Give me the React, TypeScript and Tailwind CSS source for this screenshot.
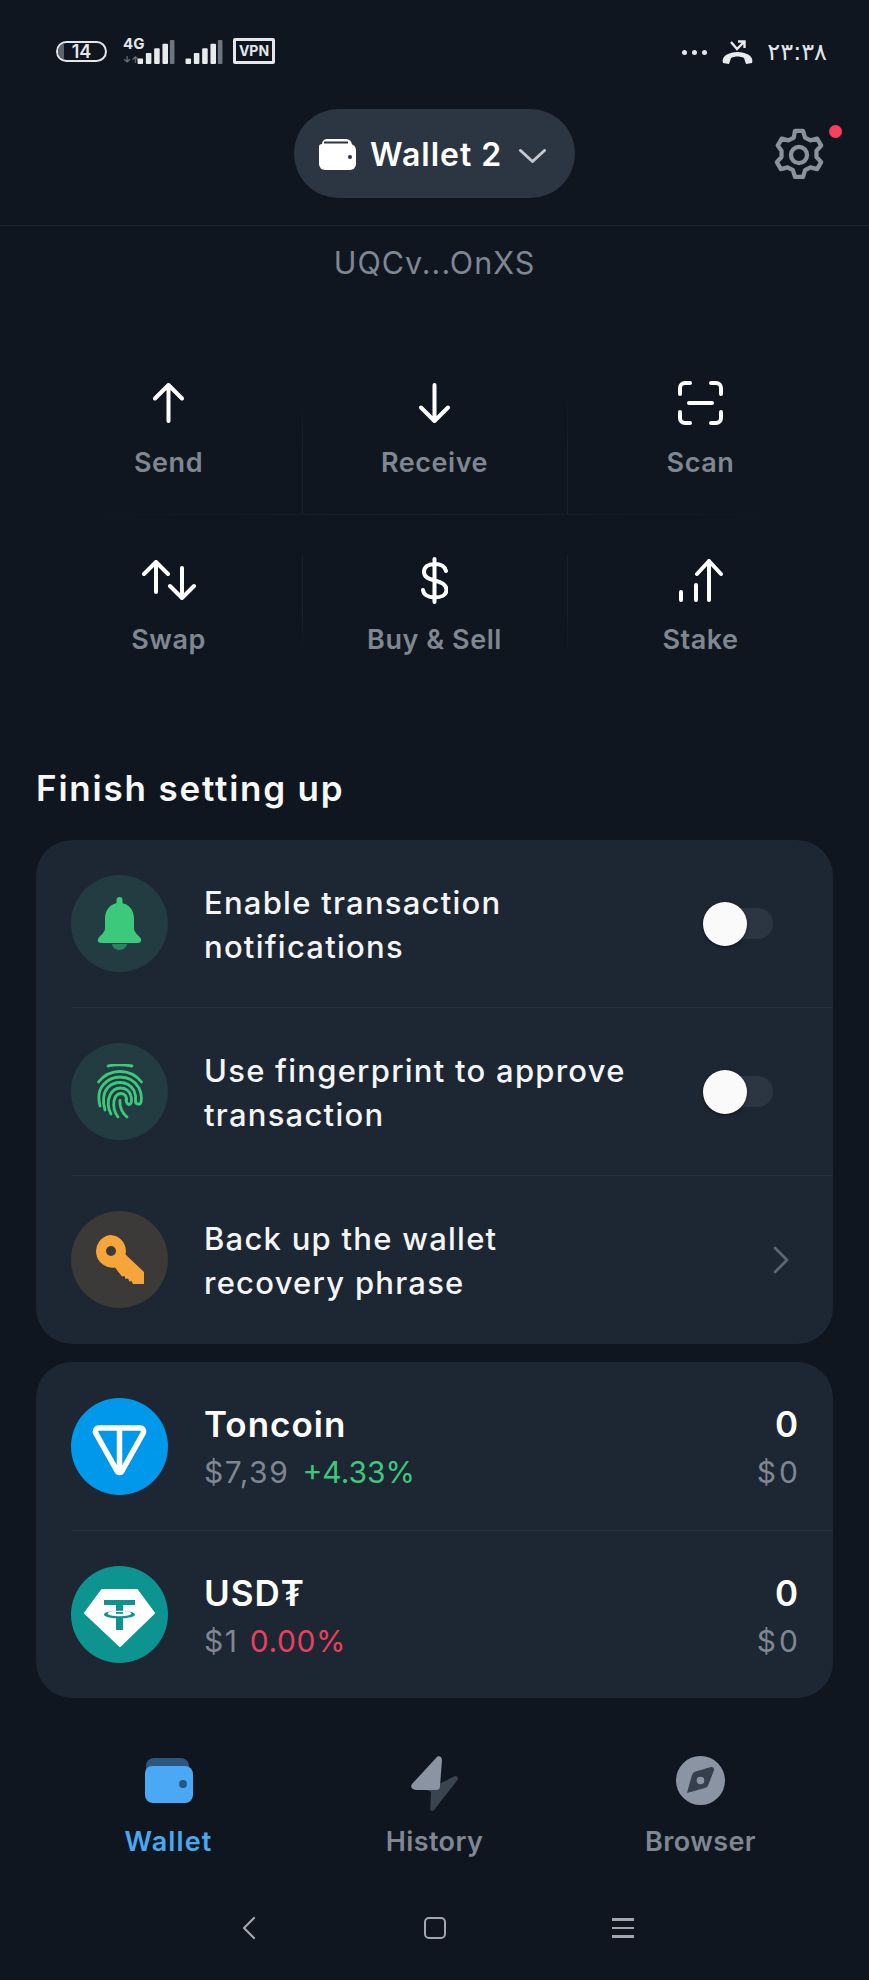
import React from 'react';

const fontStack = { fontFamily: 'Inter, "Noto Sans", sans-serif' };

const WalletGlyph = ({ className = '' }: { className?: string }) => (
  <svg viewBox="0 0 37 32" className={className}>
    <path d="M3 8V6a5 5 0 0 1 5-5h19a6 6 0 0 1 6 6v1z" fill="#fff" />
    <path d="M5 4.5h24" stroke="#2c3542" strokeWidth="2" />
    <path d="M0 9a3 3 0 0 1 3-3h28a6 6 0 0 1 6 6v14a6 6 0 0 1-6 6H6a6 6 0 0 1-6-6z" fill="#fff" />
    <circle cx="31" cy="19" r="2" fill="#2c3542" />
  </svg>
);

const Signal = ({ className = '' }: { className?: string }) => (
  <svg viewBox="0 0 40 26" className={className}>
    <rect x="0" y="20" width="6" height="6" rx="1" fill="#e8eaee" />
    <rect x="9" y="14" width="6" height="12" rx="1" fill="#e8eaee" />
    <rect x="18" y="9" width="6" height="17" rx="1" fill="#e8eaee" />
    <rect x="27" y="4" width="6" height="22" rx="1" fill="#e8eaee" />
    <rect x="35" y="0" width="5" height="26" rx="1" fill="#6f757e" />
  </svg>
);

const StatusBar = () => (
  <div className="h-[109px] flex justify-between pl-[56px] pr-[42px] pt-[38px]">
    <div className="flex items-start">
      <div className="relative overflow-hidden w-[51px] h-[21px] mt-[3px] rounded-full border-2 border-[#e4e6ea] flex items-center justify-center text-[18px] font-semibold leading-none text-[#e4e6ea]">
        <span className="absolute left-0 top-0 bottom-0 w-[6px] bg-[#5d636c]" />
        14
      </div>
      <div className="relative w-[52px] h-[26px] ml-[16px]">
        <span className="absolute left-0 top-[-2px] text-[15px] font-bold leading-none text-[#e4e6ea]">4G</span>
        <span className="absolute left-0 bottom-0 text-[9px] font-bold leading-none text-[#6f757e]">↓↑</span>
        <Signal className="absolute right-0 bottom-0 w-[38px] h-[24px]" />
      </div>
      <Signal className="w-[38px] h-[24px] ml-[10px] mt-[2px]" />
      <div className="w-[42px] h-[26px] ml-[10px] border-[3px] border-[#e4e6ea] rounded-[2px] flex items-center justify-center text-[14px] font-bold leading-none text-[#e4e6ea]">
        VPN
      </div>
    </div>
    <div className="flex items-center h-[28px]">
      <div className="flex gap-[5px]">
        <span className="w-[5px] h-[5px] rounded-full bg-[#e4e6ea]" />
        <span className="w-[5px] h-[5px] rounded-full bg-[#e4e6ea]" />
        <span className="w-[5px] h-[5px] rounded-full bg-[#e4e6ea]" />
      </div>
      <svg viewBox="0 0 31 24" className="w-[31px] h-[24px] ml-[15px]">
        <path d="M1 23c-1-3 0-6 3-8 7-4 16-4 23 0 3 2 4 5 3 8l-6 1-2-6c-4-2-9-2-13 0l-2 6z" fill="#e8eaee" />
        <path d="M9 2l6 7 7-7M16 1.5h6.5V8" fill="none" stroke="#e8eaee" strokeWidth="2.4" />
      </svg>
      <span
        className="ml-[14px] text-[24px] leading-none text-[#e4e6ea]"
        style={{ fontFamily: '"DejaVu Sans", sans-serif' }}
      >
        ۲۳:۳۸
      </span>
    </div>
  </div>
);

const Header = () => (
  <div className="h-[117px] border-b border-[#1c232e] grid grid-cols-[1fr_281px_1fr]">
    <div />
    <div className="h-[89px] rounded-full bg-[#2c3542] flex items-center pl-[25px]">
      <WalletGlyph className="w-[37px] h-[32px]" />
      <span className="ml-[14px] mt-[3px] text-[32px] font-semibold leading-none text-white tracking-[1px]">Wallet 2</span>
      <svg viewBox="0 0 27 14" className="w-[27px] h-[14px] ml-[17px] mt-[5px]">
        <path d="M1.5 1.5 13.5 12.5 25.5 1.5" fill="none" stroke="#c3c8cf" strokeWidth="3" strokeLinecap="round" strokeLinejoin="round" />
      </svg>
    </div>
    <div className="flex justify-end pr-[44px] pt-[19px]">
      <div className="relative w-[52px] h-[54px]">
        <svg viewBox="0.4 0.4 23.2 23.2" className="w-[52px] h-[54px]" fill="none" stroke="#8b929d" strokeWidth="1.9" strokeLinejoin="round">
          <path d="M10.2 1.2h3.6l.9 3 2.4 1.3 3-.8 1.8 3.1-2.1 2.3v2.8l2.1 2.3-1.8 3.1-3-.8-2.400 1.300-.9 3h-3.600l-.9-3-2.400-1.300-3 .8-1.800-3.100 2.100-2.300v-2.800L2.500 7.800l1.800-3.100 3 .8 2.400-1.300z" />
          <circle cx="12" cy="12" r="3.6" />
        </svg>
        <span className="absolute right-[-17px] top-[-3px] w-[13px] h-[13px] rounded-full bg-[#f9405f]" />
      </div>
    </div>
  </div>
);

const ArrowUp = () => (
  <svg viewBox="0 0 31 40" className="w-[31px] h-[40px]" fill="none" stroke="#fff" strokeWidth="4" strokeLinecap="round" strokeLinejoin="round">
    <path d="M15.5 38V2M2 15.5 15.5 2 29 15.5" />
  </svg>
);
const ArrowDown = () => (
  <svg viewBox="0 0 31 40" className="w-[31px] h-[40px]" fill="none" stroke="#fff" strokeWidth="4" strokeLinecap="round" strokeLinejoin="round">
    <path d="M15.5 2V38M2 24.5 15.5 38 29 24.5" />
  </svg>
);
const ScanIcon = () => (
  <svg viewBox="0 0 45 44" className="w-[45px] h-[44px]" fill="none" stroke="#fff" strokeWidth="4" strokeLinecap="round">
    <path d="M2 13V7a5 5 0 0 1 5-5h5M33 2h5a5 5 0 0 1 5 5v6M2 31v6a5 5 0 0 0 5 5h5M33 42h5a5 5 0 0 0 5-5v-6M11 22h23" />
  </svg>
);
const SwapIcon = () => (
  <svg viewBox="0 0 54 40" className="w-[54px] h-[40px]" fill="none" stroke="#fff" strokeWidth="4" strokeLinecap="round" strokeLinejoin="round">
    <path d="M14 32V2M2 14 14 2l12 12M40 8v30M28 26l12 12 12-12" />
  </svg>
);
const DollarIcon = () => (
  <svg viewBox="0 0 27 47" className="w-[27px] h-[47px]" fill="none" stroke="#fff" strokeWidth="4" strokeLinecap="round">
    <path d="M13.5 2v43M25 14c-1-4.500-5-7-11.500-7C7 7 3 10 3 15c0 11 22.500 6 22.500 18 0 5-5 7.500-12 7.500C7 40.500 2.500 37.500 2 33" />
  </svg>
);
const StakeIcon = () => (
  <svg viewBox="0 0 44 43" className="w-[44px] h-[43px]" fill="none" stroke="#fff" strokeWidth="4" strokeLinecap="round" strokeLinejoin="round">
    <path d="M2 41v-8M17 41V26M30 41V2M18 15 30 2l12 13" />
  </svg>
);

const ActionCell = ({ icon, label, middle, fade }: { icon: React.ReactNode; label: string; middle?: boolean; fade?: 'down' | 'up' }) => (
  <div
    className={`w-[266px] flex flex-col items-center ${middle ? 'border-x border-transparent' : ''} ${
      middle && fade === 'down' ? '[border-image:linear-gradient(to_bottom,transparent_15%,#1a212b_50%)_1]' : ''
    } ${middle && fade === 'up' ? '[border-image:linear-gradient(to_bottom,#1a212b_50%,transparent_85%)_1]' : ''}`}
  >
    <div className="h-[50px] flex items-center justify-center">{icon}</div>
    <span className="mt-[19px] text-[27px] font-semibold leading-[32px] text-[#7f8793] tracking-[0.55px]">{label}</span>
  </div>
);

const Actions = () => (
  <div className="w-[798px] mx-auto mt-[97px]">
    <div className="flex h-[136px]">
      <ActionCell icon={<ArrowUp />} label="Send" />
      <ActionCell icon={<ArrowDown />} label="Receive" middle fade="down" />
      <ActionCell icon={<ScanIcon />} label="Scan" />
    </div>
    <div className="h-px mx-[33px] bg-linear-to-r from-transparent via-[#1a212b] to-transparent" />
    <div className="flex h-[156px] pt-[40px]">
      <ActionCell icon={<SwapIcon />} label="Swap" />
      <ActionCell icon={<DollarIcon />} label="Buy &amp; Sell" middle fade="up" />
      <ActionCell icon={<StakeIcon />} label="Stake" />
    </div>
  </div>
);

const IconCircle = ({ bg, children }: { bg: string; children: React.ReactNode }) => (
  <div className={`w-[97px] h-[97px] shrink-0 rounded-full flex items-center justify-center ${bg}`}>{children}</div>
);

const Toggle = () => (
  <div className="relative w-[70px] h-[31px] rounded-full bg-[#2c3542] ml-auto mr-[60px]">
    <span className="absolute left-0 top-[-6px] w-[44px] h-[44px] rounded-full bg-[#fafafa] shadow-[0_1px_3px_rgba(0,0,0,0.5)]" />
  </div>
);

const BellIcon = () => (
  <svg viewBox="0 0 45 53" className="w-[45px] h-[53px]">
    <path d="M15 47h15a7.500 6 0 0 1-15 0z" fill="#2d8263" />
    <rect x="19.500" y="0" width="6" height="10" rx="3" fill="#3cc97c" />
    <path d="M22.500 6C13 6 8 13 8 22v9c0 4-3 6-6.500 10C0 43 1 46 4 46h37c3 0 4-3 2.500-5C40 37 37 35 37 31v-9C37 13 32 6 22.500 6z" fill="#3cc97c" />
  </svg>
);

const FingerprintIcon = () => (
  <svg viewBox="0 0 46 55" className="w-[46px] h-[55px]" fill="none" stroke="#3cc97c" strokeWidth="2.800" strokeLinecap="round">
    <path d="M11 2c7-1.500 16-1.500 24 0" />
    <path d="M1.500 18C7 11 15 7.500 23 7.500S39 11 44.500 18" />
    <path d="M3 42C1 34 1.500 26 6.500 20.500 11 15.500 17 13 23 13c8 0 15 4 19 11 2 4 3 9 2 14-.5 3-5 3-5.500-.5" />
    <path d="M8 46C5.500 38 6 29 10.500 24 14 20 18.500 18.500 23 18.500c6 0 11 3 14 8 1.500 3.500 2 7 1.500 10.500" />
    <path d="M14 50c-3-5-4-13-1-19 2.500-5 6.500-7 10.500-7 5 0 9.500 3 10.500 8 1 4 .5 8-1.500 8.500-3 .5-3-2.500-3.500-5" />
    <path d="M21 53c-3-4-5-10-4-16 1-5 3.500-7.500 7-7.500 4 0 6 3 5.500 8" />
    <path d="M30 53c-4-3-8-10-7-16.500" />
  </svg>
);

const KeyIcon = () => (
  <svg viewBox="0 0 49 49" className="w-[49px] h-[49px]">
    <path
      fillRule="evenodd"
      d="M15 0a16 16 0 0 1 15.500 19.500L49 37v12H38l-1.500-3-2 .5-1.500-3-2.500.5-1-3-2.500.5-7-9A16 16 0 1 1 15 0zm1 11a5 5 0 1 0 0 10 5 5 0 0 0 0-10z"
      fill="#f6a53a"
    />
  </svg>
);

const SetupRow = ({ icon, bg, lines, right, divider }: { icon: React.ReactNode; bg: string; lines: string[]; right: React.ReactNode; divider?: boolean }) => (
  <div className={`ml-[35px] flex items-center h-[167px] ${divider ? 'border-t border-[#27303c] h-[168px]' : ''}`}>
    <IconCircle bg={bg}>{icon}</IconCircle>
    <div className="ml-[36px] pt-[2px] text-[31px] font-medium leading-[44px] text-[#f4f5f6] tracking-[1.25px]">
      {lines.map((l) => (
        <div key={l}>{l}</div>
      ))}
    </div>
    {right}
  </div>
);

const SetupCard = () => (
  <div className="mx-[36px] mt-[30px] rounded-[36px] bg-[#1d2633] h-[504px]">
    <SetupRow icon={<BellIcon />} bg="bg-[#233c42]" lines={['Enable transaction', 'notifications']} right={<Toggle />} />
    <SetupRow divider icon={<FingerprintIcon />} bg="bg-[#233c42]" lines={['Use fingerprint to approve', 'transaction']} right={<Toggle />} />
    <SetupRow
      divider
      icon={<KeyIcon />}
      bg="bg-[#3c3a38]"
      lines={['Back up the wallet', 'recovery phrase']}
      right={
        <svg viewBox="0 0 16 28" className="w-[16px] h-[28px] ml-auto mr-[44px]" fill="none" stroke="#5c6571" strokeWidth="2.800" strokeLinecap="round" strokeLinejoin="round">
          <path d="M2 2l12 12L2 26" />
        </svg>
      }
    />
  </div>
);

const TonLogo = () => (
  <svg viewBox="0 0 97 97" className="w-[97px] h-[97px]">
    <circle cx="48.500" cy="48.500" r="48.500" fill="#0098ea" />
    <path d="M28 30h41c3 0 4.500 3 3 5.500L51 73c-1 2-4 2-5 0L25 35.500C23.500 33 25 30 28 30z" fill="none" stroke="#fff" strokeWidth="5.500" strokeLinejoin="round" />
    <path d="M48.500 30v44" stroke="#fff" strokeWidth="5.500" />
  </svg>
);

const TetherLogo = () => (
  <svg viewBox="0 0 97 97" className="w-[97px] h-[97px]">
    <circle cx="48.500" cy="48.500" r="48.500" fill="#0d9490" />
    <path d="M31 24h35l17 23-34 33-35-33z" fill="#fff" stroke="#fff" strokeWidth="2" strokeLinejoin="round" />
    <path d="M33 34h31v5H52v6c7 .3 12 1.500 12 3.500S59 52 52 52.300V64H45V52.300C38 52 33 50.500 33 48.500S38 45.300 45 45v-6H33z" fill="#0d9490" />
    <ellipse cx="48.500" cy="47.500" rx="12" ry="2.800" fill="#fff" />
    <rect x="45" y="46" width="7" height="1.800" fill="#0d9490" />
  </svg>
);

const TokenRow = ({ logo, name, sub, divider }: { logo: React.ReactNode; name: string; sub: React.ReactNode; divider?: boolean }) => (
  <div className={`ml-[35px] flex items-center pr-[35px] ${divider ? 'border-t border-[#27303c] h-[168px]' : 'h-[168px]'}`}>
    {logo}
    <div className="ml-[36px] pt-[2px] flex flex-col">
      <span className="text-[35px] font-semibold leading-[42px] text-white tracking-[1px]">{name}</span>
      <span className="mt-[8px] text-[30px] leading-[38px]">{sub}</span>
    </div>
    <div className="ml-auto pt-[2px] flex flex-col items-end">
      <span className="text-[35px] font-semibold leading-[42px] text-white">0</span>
      <span className="mt-[8px] text-[30px] leading-[38px] text-[#7f8793] tracking-[3px] -mr-[3px]">$0</span>
    </div>
  </div>
);

const TokenCard = () => (
  <div className="mx-[36px] mt-[18px] rounded-[36px] bg-[#1d2633] h-[336px]">
    <TokenRow
      logo={<TonLogo />}
      name="Toncoin"
      sub={
        <>
          <span className="text-[#7f8793] tracking-[1.6px]">$7,39</span>
          <span className="ml-[13px] text-[#3cc97c]">+4.33%</span>
        </>
      }
    />
    <TokenRow
      divider
      logo={<TetherLogo />}
      name="USD₮"
      sub={
        <>
          <span className="text-[#7f8793] tracking-[1.6px]">$1</span>
          <span className="ml-[11px] text-[#e8405f] tracking-[0.6px]">0.00%</span>
        </>
      }
    />
  </div>
);

const TabItem = ({ icon, label, color }: { icon: React.ReactNode; label: string; color: string }) => (
  <div className="w-[266px] flex flex-col items-center">
    <div className="h-[56px] flex items-center justify-center">{icon}</div>
    <span className={`mt-[15px] text-[27px] font-semibold leading-[32px] ${color}`}>{label}</span>
  </div>
);

const TabBar = () => (
  <div className="mt-[57px] w-[798px] mx-auto flex">
    <TabItem
      label="Wallet"
      color="text-[#4aa8f0] tracking-[1.1px]"
      icon={
        <svg viewBox="0 0 48 45" className="w-[48px] h-[45px] -mt-[6px]">
          <path d="M1 14V8a8 8 0 0 1 8-8h27a8 8 0 0 1 8 8v6z" fill="#2a5780" />
          <path d="M0 15a7 7 0 0 1 7-7h33a8 8 0 0 1 8 8v21a8 8 0 0 1-8 8H8a8 8 0 0 1-8-8z" fill="#4aa8f5" />
          <circle cx="38" cy="26" r="4" fill="#2a5780" />
        </svg>
      }
    />
    <TabItem
      label="History"
      color="text-[#7f8793] tracking-[0.4px]"
      icon={
        <svg viewBox="0 0 47 55" className="w-[47px] h-[55px]">
          <path d="M44 20c3 0 3.500 2 2.500 4L23 54c-1.500 1.500-4 1-3.800-1.500L20 36l-4-2z" fill="#3a4350" />
          <path d="M25 2c2-3 6-2 6 2l-2 26c0 3-1.500 4-4 4H5c-4 0-6-3-4-6z" fill="#8b94a3" />
        </svg>
      }
    />
    <TabItem
      label="Browser"
      color="text-[#7f8793] tracking-[0.4px]"
      icon={
        <svg viewBox="0 0 49 49" className="w-[49px] h-[49px] -mt-[6px]">
          <circle cx="24.500" cy="24.500" r="24.500" fill="#8b94a3" />
          <path d="M35 11 19.500 15.500a5 5 0 0 0-3.500 3.500L11 37l18-5a5 5 0 0 0 3.500-3.500L38 14c.5-2-1-3.500-3-3z" fill="#363f4c" />
          <circle cx="24.500" cy="24.500" r="3.800" fill="#8b94a3" />
        </svg>
      }
    />
  </div>
);

const NavBar = () => (
  <div className="mt-[58px] pl-[74px] flex items-center">
    <div className="w-[350px] flex justify-center">
      <svg viewBox="0 0 14 24" className="w-[14px] h-[24px]" fill="none" stroke="#a2a6ad" strokeWidth="2.200" strokeLinecap="round" strokeLinejoin="round">
        <path d="M12 2 2 12l10 10" />
      </svg>
    </div>
    <div className="w-[22px] h-[22px] rounded-[5px] border-[2.5px] border-[#a2a6ad]" />
    <div className="w-[354px] flex justify-center">
      <div className="flex flex-col gap-[6px] w-[22px]">
        <span className="h-[2.500px] bg-[#a2a6ad]" />
        <span className="h-[2.500px] bg-[#a2a6ad]" />
        <span className="h-[2.500px] bg-[#a2a6ad]" />
      </div>
    </div>
  </div>
);

export default function App() {
  return (
    <div className="w-[869px] h-[1980px] overflow-hidden bg-[#0f1620]" style={fontStack}>
      <StatusBar />
      <Header />
      <div className="mt-[19px] text-center text-[30.5px] leading-[36px] text-[#7f8793] tracking-[1px]">UQCv...OnXS</div>
      <Actions />
      <h2 className="mt-[95px] pl-[36px] text-[35px] font-semibold leading-[44px] text-[#f7f8f9] tracking-[1.8px]">Finish setting up</h2>
      <SetupCard />
      <TokenCard />
      <TabBar />
      <NavBar />
    </div>
  );
}
